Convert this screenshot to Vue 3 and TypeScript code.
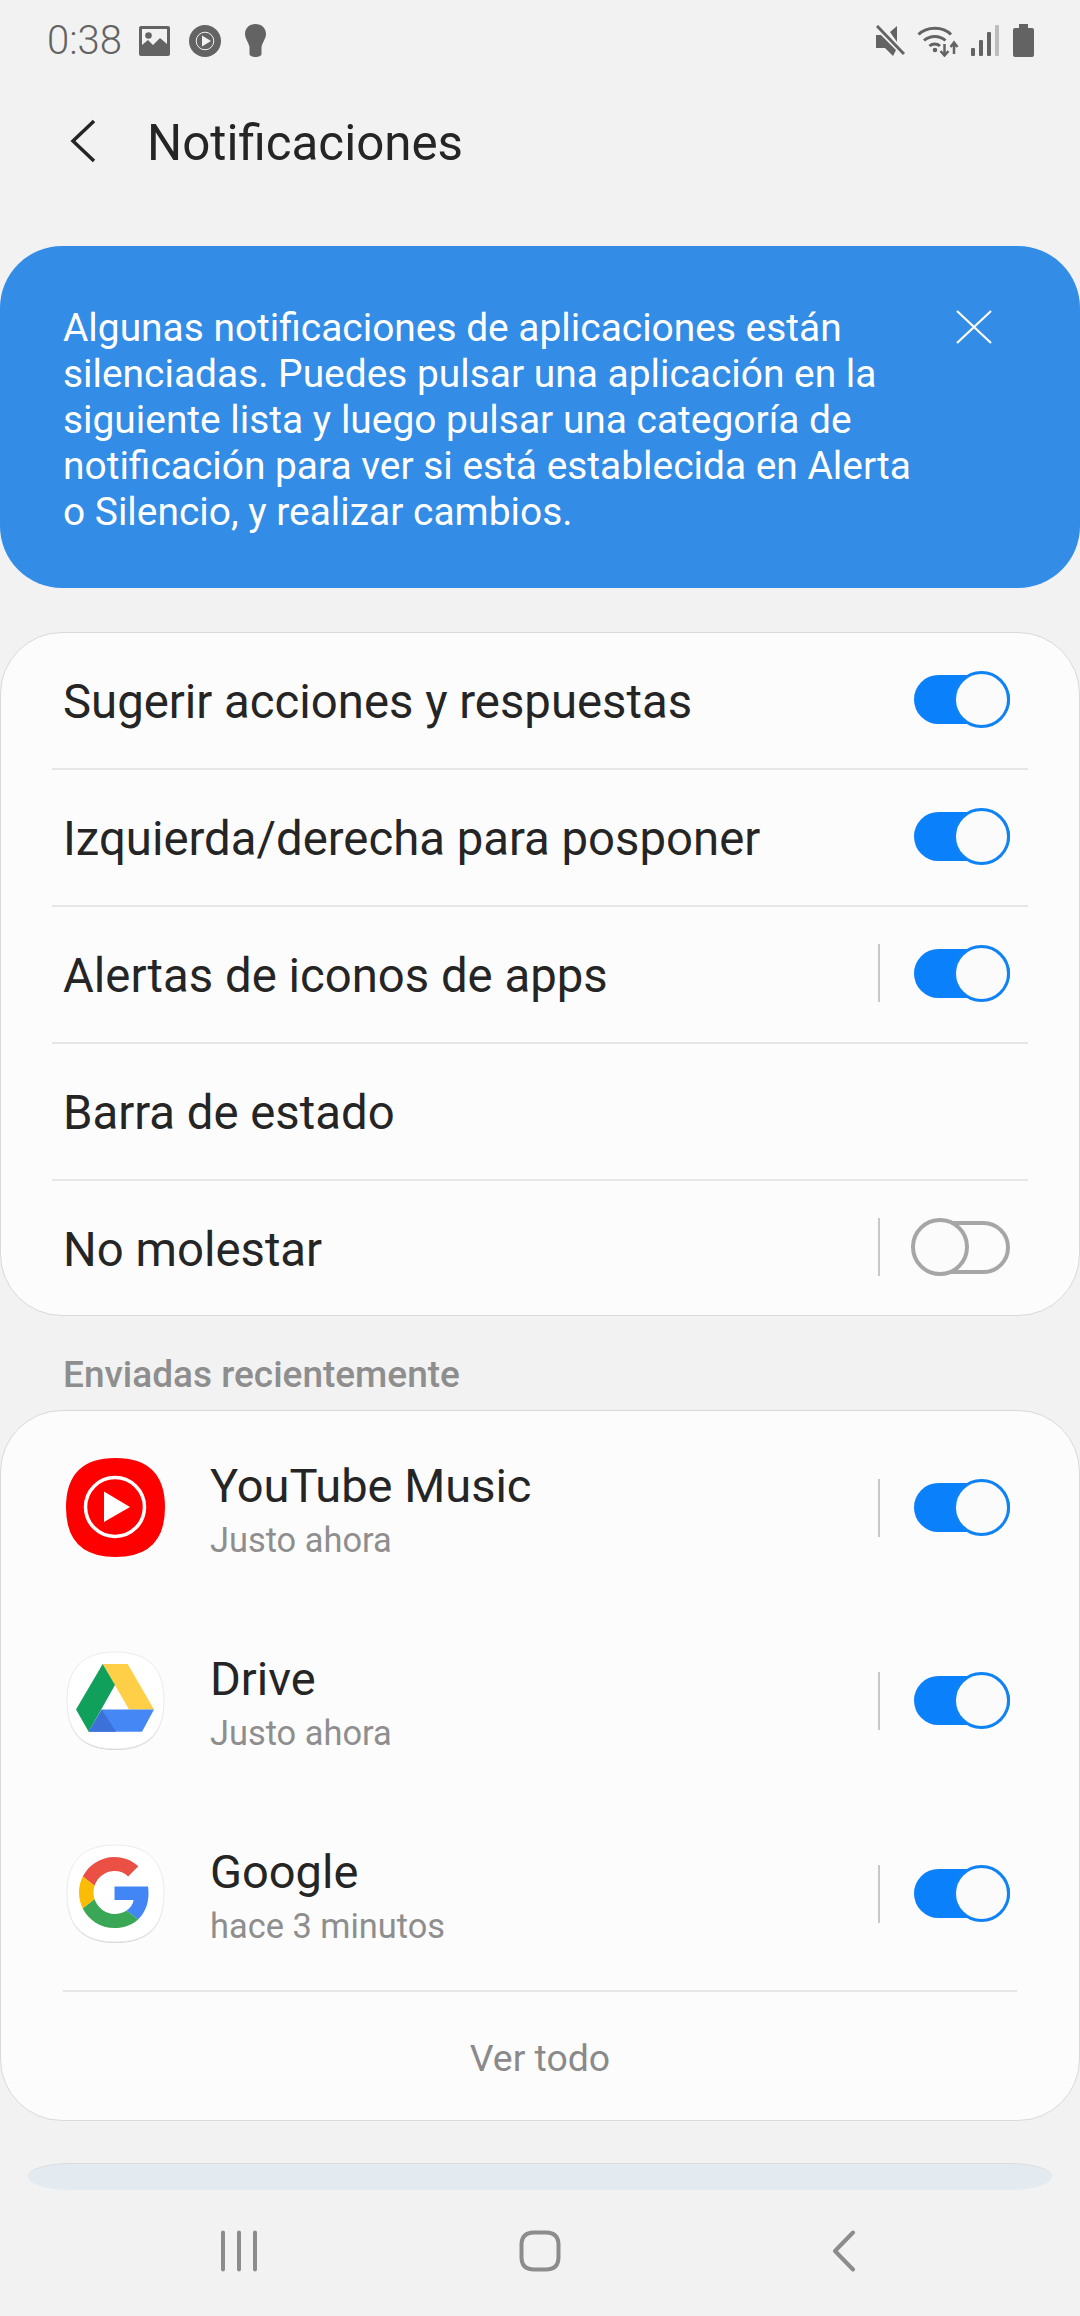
<script setup lang="ts">
interface SettingRow { label: string; toggle: boolean | null; bar: boolean }
const settings: SettingRow[] = [
  { label: 'Sugerir acciones y respuestas', toggle: true, bar: false },
  { label: 'Izquierda/derecha para posponer', toggle: true, bar: false },
  { label: 'Alertas de iconos de apps', toggle: true, bar: true },
  { label: 'Barra de estado', toggle: null, bar: false },
  { label: 'No molestar', toggle: false, bar: true },
]
const apps = [
  { key: 'yt', name: 'YouTube Music', time: 'Justo ahora' },
  { key: 'drive', name: 'Drive', time: 'Justo ahora' },
  { key: 'google', name: 'Google', time: 'hace 3 minutos' },
]
const squircle = 'M49.5 1C82 1 98 17 98 49.5S82 98 49.5 98S1 82 1 49.5S17 1 49.5 1Z'
</script>

<template>
  <div class="page">
    <div class="status">
      <div class="status-left">
        <span class="time">0:38</span>
        <svg class="si" style="width:31px;height:30px" viewBox="0 0 31 30"><path fill="#636363" fill-rule="evenodd" d="M2 0h27a2 2 0 0 1 2 2v26a2 2 0 0 1-2 2H2a2 2 0 0 1-2-2V2a2 2 0 0 1 2-2Zm1 3v16l6-5 5 5 7-7 7 6V3Z"/><circle cx="9.500" cy="9.500" r="3.300" fill="#636363"/></svg>
        <svg class="si g1" style="width:32px;height:32px" viewBox="0 0 32 32"><circle cx="16" cy="16" r="16" fill="#636363"/><circle cx="16" cy="16" r="8.800" fill="none" stroke="#f2f2f2" stroke-width="1"/><path d="M13 10.500 22 16l-9 5.500Z" fill="#f2f2f2"/></svg>
        <svg class="si g2" style="width:21px;height:33px" viewBox="0 0 21 33"><path fill="#636363" d="M10.500 0C16.500 0 21 4 21 10c0 4.500-3.500 8-4.500 13v7c0 2-3 3-6 3s-6-1-6-3v-7C3.500 18 0 14.500 0 10 0 4 4.500 0 10.500 0Z"/></svg>
      </div>
      <div class="status-right">
        <svg style="width:29px;height:32px" viewBox="0 0 29 32"><path fill="#636363" d="M0 10h5L20 25l-3 6-8-8H2a2 2 0 0 1-2-2ZM14 7l7-6v16Z"/><path d="M1 1 28 29" stroke="#f2f2f2" stroke-width="5"/><path d="M1 1 28 29" stroke="#636363" stroke-width="3"/><path fill="#636363" d="M0 11l4-1v13H0Z"/></svg>
        <svg style="width:42px;height:33px;margin-left:12px" viewBox="0 0 42 33"><g fill="none" stroke="#636363" stroke-width="3"><path d="M1.500 10.500C10 2 26 2 34 10.500"/><path d="M7 16.500c6-5.500 15.500-5.500 21.500 0"/><path d="M12.500 22c3-2.700 7.500-2.700 10.500 0"/></g><circle cx="18" cy="26" r="2.300" fill="#636363"/><path d="M27.500 20v10M23.500 27l4 4.500 4-4.500" fill="none" stroke="#636363" stroke-width="2.500"/><path d="M37 30V19M33.500 23l3.500-4.500 3.500 4.500" fill="none" stroke="#636363" stroke-width="2.500"/></svg>
        <svg style="width:28px;height:31px;margin-left:12px" viewBox="0 0 28 31"><rect x="0" y="23" width="4" height="8" rx="1" fill="#636363"/><rect x="8" y="15" width="4" height="16" rx="1" fill="#636363"/><rect x="16" y="7" width="4" height="24" rx="1" fill="#636363"/><rect x="24" y="0" width="4" height="31" rx="1" fill="#bdbdbd"/></svg>
        <svg style="width:21px;height:33px;margin-left:14px" viewBox="0 0 21 33"><path fill="#636363" d="M6 0h9v4h4a2 2 0 0 1 2 2v25a2 2 0 0 1-2 2H2a2 2 0 0 1-2-2V6a2 2 0 0 1 2-2h4Z"/></svg>
      </div>
    </div>

    <div class="header">
      <svg class="back" viewBox="0 0 26 44"><path d="M24 2 3 22l21 20" fill="none" stroke="#252525" stroke-width="3.500"/></svg>
      <span class="title">Notificaciones</span>
    </div>

    <div class="banner">
      <p class="banner-text">Algunas notificaciones de aplicaciones están<br>silenciadas. Puedes pulsar una aplicación en la<br>siguiente lista y luego pulsar una categoría de<br>notificación para ver si está establecida en Alerta<br>o Silencio, y realizar cambios.</p>
      <svg class="close" viewBox="0 0 36 34"><path d="M1 1 35 33M35 1 1 33" stroke="#fff" stroke-width="2.200" fill="none"/></svg>
    </div>

    <div class="card settings">
      <div v-for="s in settings" :key="s.label" class="set-row">
        <span class="label">{{ s.label }}</span>
        <span v-if="s.bar" class="vbar"></span>
        <span v-if="s.toggle !== null" class="toggle" :class="{ off: !s.toggle }"><span class="thumb"></span></span>
      </div>
    </div>

    <div class="section">Enviadas recientemente</div>

    <div class="card recent">
      <div v-for="a in apps" :key="a.key" class="app-row">
        <svg class="app-icon" viewBox="0 0 99 100">
          <template v-if="a.key === 'yt'">
            <path :d="squircle" fill="#ff0000" stroke="#ff0000" stroke-width="2"/>
            <circle cx="49" cy="49" r="29.500" fill="none" stroke="#fff" stroke-width="3.500"/>
            <path d="M38 33.500 64 49 38 64Z" fill="#fff"/>
          </template>
          <template v-else>
            <path :d="squircle" fill="#c9c9c9" transform="translate(0 1)"/>
            <path :d="squircle" fill="#fff" stroke="#ececec" stroke-width="1"/>
            <template v-if="a.key === 'drive'">
              <path d="M36.700 13H61.700L88 58.600H63Z" fill="#ffcf47"/>
              <path d="M36.700 13 49 34 22.700 80.700 10 58.600Z" fill="#11a05c"/>
              <path d="M35.700 58.600H88L76 80.700H22.700Z" fill="#4587f4"/>
              <path d="M35.700 58.600 50 80.700H22.700Z" fill="#3d70d9"/>
            </template>
            <g v-else transform="translate(13 13) scale(1.48)">
              <path fill="#EA5043" d="M24 9.500c3.540 0 6.710 1.220 9.210 3.600l6.850-6.850C35.900 2.380 30.470 0 24 0 14.620 0 6.510 5.380 2.560 13.220l7.980 6.190C12.430 13.720 17.740 9.500 24 9.500z"/>
              <path fill="#4285F4" d="M46.980 24.550c0-1.570-.15-3.090-.38-4.550H24v9.020h12.940c-.58 2.960-2.260 5.480-4.780 7.180l7.730 6c4.510-4.180 7.090-10.360 7.090-17.650z"/>
              <path fill="#FBBC05" d="M10.530 28.590c-.48-1.450-.76-2.990-.76-4.590s.27-3.140.76-4.590l-7.980-6.190C.92 16.460 0 20.120 0 24c0 3.880.92 7.540 2.560 10.780l7.970-6.190z"/>
              <path fill="#3AA757" d="M24 48c6.480 0 11.930-2.130 15.890-5.810l-7.730-6c-2.150 1.450-4.920 2.300-8.160 2.300-6.260 0-11.570-4.220-13.470-9.910l-7.980 6.190C6.510 42.620 14.620 48 24 48z"/>
            </g>
          </template>
        </svg>
        <div class="app-text">
          <span class="app-name">{{ a.name }}</span>
          <span class="app-time">{{ a.time }}</span>
        </div>
        <span class="vbar"></span>
        <span class="toggle"><span class="thumb"></span></span>
      </div>
      <div class="see-all">Ver todo</div>
    </div>

    <div class="peek"></div>

    <div class="nav">
      <svg class="nav-recents" viewBox="0 0 38 42"><path d="M3 2.500v37M19 2.500v37M35 2.500v37" stroke="#8c8c8c" stroke-width="4" stroke-linecap="round"/></svg>
      <svg class="nav-home" viewBox="0 0 42 42"><path d="M15 2.500h12C36 2.500 39.500 7 39.500 15v12c0 8-3.500 12.500-12.500 12.500H15C6 39.500 2.500 35 2.500 27V15C2.500 7 6 2.500 15 2.500Z" fill="none" stroke="#8c8c8c" stroke-width="4"/></svg>
      <svg class="nav-back" viewBox="0 0 24 42"><path d="M21 2.500 3 21l18 18.500" fill="none" stroke="#8c8c8c" stroke-width="4" stroke-linecap="round" stroke-linejoin="round"/></svg>
    </div>
  </div>
</template>

<style>
html, body { margin: 0; background: #f2f2f2; }
</style>

<style scoped>
.page {
  width: 1080px;
  height: 2316px;
  overflow: hidden;
  background: #f2f2f2;
  font-family: Roboto, sans-serif;
  color: #252525;
}
.status {
  height: 80px;
  box-sizing: border-box;
  padding: 24px 46px 0 47px;
  display: flex;
  justify-content: space-between;
  align-items: flex-start;
}
.status-left, .status-right { display: flex; align-items: center; height: 33px; }
.time { font-size: 40px; font-weight: 300; color: #636363; width: 92px; line-height: 33px; }
.g1 { margin-left: 19px; }
.g2 { margin-left: 24px; }
.header {
  height: 126px;
  display: flex;
  align-items: center;
  padding-left: 70px;
  margin-top: -2px;
}
.back { width: 26px; height: 44px; }
.title { margin-left: 51px; font-size: 49.3px; line-height: 56px; padding-top: 3px; }
.banner {
  height: 342px;
  margin-top: 42px;
  box-sizing: border-box;
  background: #338ce5;
  border-radius: 62px;
  padding: 59px 88px 0 63px;
  display: flex;
  justify-content: space-between;
  align-items: flex-start;
  color: #fff;
}
.banner-text { margin: 0; font-size: 38.9px; line-height: 46px; white-space: nowrap; }
.close { width: 36px; height: 34px; margin-top: 5px; }
.card {
  background: #fcfcfc;
  border: 1px solid #d9d9d9;
  border-radius: 62px;
  box-sizing: border-box;
}
.settings { margin-top: 44px; height: 684px; }
.set-row {
  height: 137px;
  box-sizing: border-box;
  margin: 0 51px 0 51px;
  padding: 0 18px 3px 11px;
  display: flex;
  align-items: center;
  border-bottom: 2px solid #e6e6e6;
}
.set-row:last-child { border-bottom: 0; height: 135px; }
.label { flex: 1; font-size: 47.3px; padding-top: 6px; }
.vbar { width: 2px; height: 58px; background: #c8c8c8; margin-right: 34px; }
.toggle {
  position: relative;
  width: 96px;
  height: 49px;
  border-radius: 25px;
  background: #0a81fb;
  display: block;
  box-sizing: border-box;
}
.thumb {
  position: absolute;
  right: 0;
  top: -4px;
  width: 57px;
  height: 57px;
  box-sizing: border-box;
  border-radius: 50%;
  background: #fbfbfb;
  border: 3px solid #0f82f5;
}
.toggle.off {
  width: 98px;
  height: 53px;
  margin-left: -2px;
  border-radius: 27px;
  background: #fcfcfc;
  border: 4px solid #a6a6a6;
}
.toggle.off .thumb {
  left: -5px;
  right: auto;
  top: -6.500px;
  width: 58px;
  height: 58px;
  border: 4px solid #a6a6a6;
  background: #fbfbfb;
}
.section {
  height: 94px;
  box-sizing: border-box;
  padding: 39px 0 0 63px;
  font-size: 37px;
  line-height: 40px;
  font-weight: 500;
  color: #8e8e8e;
}
.recent { height: 711px; }
.app-row {
  height: 193px;
  display: flex;
  align-items: center;
  padding: 0 69px 0 65px;
}
.app-icon { width: 99px; height: 100px; flex: none; }
.app-text { flex: 1; margin-left: 45px; display: flex; flex-direction: column; padding-top: 6px; }
.app-name { font-size: 47px; line-height: 50px; }
.app-time { font-size: 34.4px; line-height: 40px; margin-top: 9px; color: #8e8e8e; }
.see-all {
  margin: 0 62px 0 62px;
  border-top: 2px solid #e6e6e6;
  height: 128px;
  box-sizing: border-box;
  display: flex;
  align-items: center;
  justify-content: center;
  font-size: 37.400px;
  color: #8a8a8a;
  padding-top: 6px;
}
.peek {
  margin: 42px 28px 0;
  height: 27px;
  background: #e3eaf0;
  border-top: 1px solid #d8dcdf;
  box-sizing: border-box;
  border-radius: 42px / 13.5px;
}
.nav { position: relative; height: 80px; margin-top: 40px; }
.nav-recents { position: absolute; left: 220px; top: 0; width: 38px; height: 42px; }
.nav-home { position: absolute; left: 519px; top: 0; width: 42px; height: 42px; }
.nav-back { position: absolute; left: 832px; top: 0; width: 24px; height: 42px; }
</style>
